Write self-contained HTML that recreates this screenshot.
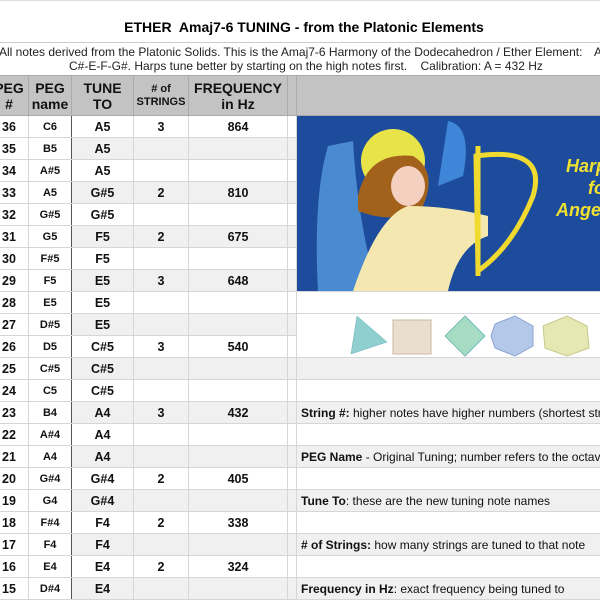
<!DOCTYPE html>
<html><head><style>
body{margin:0;width:600px;height:600px;overflow:hidden;background:#fff;font-family:"Liberation Sans",Arial,sans-serif;position:relative}
.t{position:absolute;top:19px;left:0;width:600px;text-align:center;font-weight:bold;font-size:14px;padding-left:8px;box-sizing:border-box}
.s{position:absolute;font-size:12px;color:#222;white-space:nowrap}
.hl{position:absolute;left:0;width:600px;height:1px;background:#ccc}
table{position:absolute;left:-11px;top:75px;border-collapse:collapse;table-layout:fixed;width:620px}
td{border:1px solid #d6d6d6;height:21px;padding:0;text-align:center;font-weight:bold;font-size:12.5px;color:#111;white-space:nowrap;overflow:hidden}
tr.h td{background:#c3c3c3;height:39px;border-color:#aaa;font-size:14px;line-height:16px}
tr.h td.sm{font-size:11px;line-height:13px}
tr.g td.c{background:#f0f0f0}
td.k{border-right:1.5px solid #555}
td.pn{font-size:11px}
td.r{text-align:left;font-weight:normal;font-size:12px;padding-left:4px}
</style></head><body>
<div class="hl" style="top:0;background:#ddd"></div>
<div class="t">ETHER&nbsp; Amaj7-6 TUNING - from the Platonic Elements</div>
<div class="hl" style="top:42px"></div>
<div class="s" style="left:-1px;top:45px">All notes derived from the Platonic Solids. This is the Amaj7-6 Harmony of the Dodecahedron / Ether Element:</div>
<div class="s" style="left:594px;top:45px">A</div>
<div class="s" style="left:69px;top:59px">C#-E-F-G#. Harps tune better by starting on the high notes first.&nbsp;&nbsp;&nbsp; Calibration: A = 432 Hz</div>
<table>
<colgroup><col style="width:39px"><col style="width:43px"><col style="width:62px"><col style="width:55px"><col style="width:99px"><col style="width:9px"><col style="width:313px"></colgroup>
<tr class="h"><td>PEG<br>#</td><td class="k">PEG<br>name</td><td>TUNE<br>TO</td><td class="sm"># of<br>STRINGS</td><td>FREQUENCY<br>in Hz</td><td></td><td></td></tr>
<tr><td>36</td><td class="k pn">C6</td><td>A5</td><td>3</td><td>864</td><td></td><td rowspan="8" style="background:#1b4a98;position:relative;border:none">
<svg width="313" height="175" style="position:absolute;left:1px;top:0" viewBox="0 0 313 175">
<rect width="313" height="175" fill="#1d4c9c"/>
<path d="M30 30 Q15 80 20 175 L80 175 Q60 110 55 25 Z" fill="#4a8ad0"/>
<path d="M150 5 Q175 10 165 60 L140 70 Z" fill="#3f86d8"/>
<circle cx="95" cy="45" r="32" fill="#e9e34a"/>
<path d="M60 80 Q70 35 115 40 Q140 55 125 90 Q100 110 60 95 Z" fill="#a2621c"/>
<ellipse cx="110" cy="70" rx="17" ry="20" fill="#f4d0c0"/>
<path d="M55 175 Q80 100 110 90 Q150 90 190 100 L190 120 Q160 130 150 175 Z" fill="#f4e8b0"/>
<path d="M178 40 Q250 30 235 80 Q215 130 180 155 Z" fill="none" stroke="#f0da30" stroke-width="5"/>
<line x1="180" y1="30" x2="180" y2="160" stroke="#f0da30" stroke-width="5"/>
<text x="268" y="56" fill="#f0e030" font-style="italic" font-size="18" font-family="Liberation Sans">Harp</text>
<text x="290" y="78" fill="#f0e030" font-style="italic" font-size="18" font-family="Liberation Sans">fo</text>
<text x="258" y="100" fill="#f0e030" font-style="italic" font-size="18" font-family="Liberation Sans">Angel</text>
</svg></td></tr>
<tr class="g"><td>35</td><td class="k pn">B5</td><td class="c">A5</td><td class="c"></td><td class="c"></td><td class="c"></td></tr>
<tr><td>34</td><td class="k pn">A#5</td><td>A5</td><td></td><td></td><td></td></tr>
<tr class="g"><td>33</td><td class="k pn">A5</td><td class="c">G#5</td><td class="c">2</td><td class="c">810</td><td class="c"></td></tr>
<tr><td>32</td><td class="k pn">G#5</td><td>G#5</td><td></td><td></td><td></td></tr>
<tr class="g"><td>31</td><td class="k pn">G5</td><td class="c">F5</td><td class="c">2</td><td class="c">675</td><td class="c"></td></tr>
<tr><td>30</td><td class="k pn">F#5</td><td>F5</td><td></td><td></td><td></td></tr>
<tr class="g"><td>29</td><td class="k pn">F5</td><td class="c">E5</td><td class="c">3</td><td class="c">648</td><td class="c"></td></tr>
<tr><td>28</td><td class="k pn">E5</td><td>E5</td><td></td><td></td><td></td><td></td></tr>
<tr class="g"><td>27</td><td class="k pn">D#5</td><td class="c">E5</td><td class="c"></td><td class="c"></td><td class="c"></td><td rowspan="2" style="position:relative;background:#fff">
<svg width="260" height="44" style="position:absolute;left:48px;top:0" viewBox="0 0 260 44">
<path d="M6 40 L12 2 L42 28 Z" fill="#8fcfcf" stroke="#6ab" stroke-width=".5"/>
<rect x="48" y="6" width="38" height="34" fill="#eadfcf" stroke="#c9b8a0"/>
<path d="M100 22 L120 2 L140 22 L120 42 Z" fill="#a6dcc4" stroke="#7bb"/>
<path d="M150 10 L170 2 L188 12 L188 32 L170 42 L150 34 L146 22 Z" fill="#b4c8ea" stroke="#8aa3d0"/>
<path d="M198 12 L222 2 L242 12 L244 34 L222 42 L200 34 Z" fill="#e6e8b4" stroke="#c8c88a"/>
</svg></td></tr>
<tr><td>26</td><td class="k pn">D5</td><td>C#5</td><td>3</td><td>540</td><td></td></tr>
<tr class="g"><td>25</td><td class="k pn">C#5</td><td class="c">C#5</td><td class="c"></td><td class="c"></td><td class="c"></td><td class="c"></td></tr>
<tr><td>24</td><td class="k pn">C5</td><td>C#5</td><td></td><td></td><td></td><td></td></tr>
<tr class="g"><td>23</td><td class="k pn">B4</td><td class="c">A4</td><td class="c">3</td><td class="c">432</td><td class="c"></td><td class="c r"><b>String #:</b> higher notes have higher numbers (shortest strings = h</td></tr>
<tr><td>22</td><td class="k pn">A#4</td><td>A4</td><td></td><td></td><td></td><td></td></tr>
<tr class="g"><td>21</td><td class="k pn">A4</td><td class="c">A4</td><td class="c"></td><td class="c"></td><td class="c"></td><td class="c r"><b>PEG Name</b> - Original Tuning; number refers to the octave</td></tr>
<tr><td>20</td><td class="k pn">G#4</td><td>G#4</td><td>2</td><td>405</td><td></td><td></td></tr>
<tr class="g"><td>19</td><td class="k pn">G4</td><td class="c">G#4</td><td class="c"></td><td class="c"></td><td class="c"></td><td class="c r"><b>Tune To</b>: these are the new tuning note names</td></tr>
<tr><td>18</td><td class="k pn">F#4</td><td>F4</td><td>2</td><td>338</td><td></td><td></td></tr>
<tr class="g"><td>17</td><td class="k pn">F4</td><td class="c">F4</td><td class="c"></td><td class="c"></td><td class="c"></td><td class="c r"><b># of Strings:</b> how many strings are tuned to that note</td></tr>
<tr><td>16</td><td class="k pn">E4</td><td>E4</td><td>2</td><td>324</td><td></td><td></td></tr>
<tr class="g"><td>15</td><td class="k pn">D#4</td><td class="c">E4</td><td class="c"></td><td class="c"></td><td class="c"></td><td class="c r"><b>Frequency in Hz</b>: exact frequency being tuned to</td></tr>
</table>
</body></html>
